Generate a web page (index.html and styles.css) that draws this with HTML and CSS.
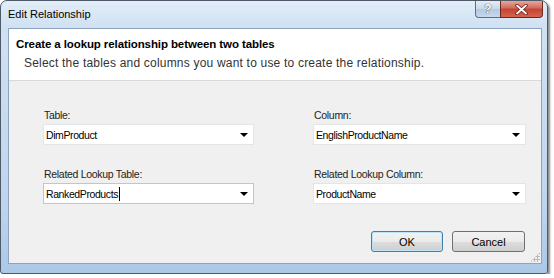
FILE: index.html
```html
<!DOCTYPE html>
<html lang="en">
<head>
  <meta charset="UTF-8" />
  <title>Edit Relationship</title>
  <link rel="stylesheet" href="styles.css">
</head>
<body>
  <div class="window">
    <div class="title-bar">
      <span class="title">Edit Relationship</span>
      <div class="caption-buttons">
        <div class="cap-btn help">?</div>
        <div class="cap-btn close">
          <svg width="13" height="11" viewBox="0 0 13 11">
            <path d="M2 1.5 L11 9.5 M11 1.5 L2 9.5" stroke="#6d1d14" stroke-width="3.4" stroke-linecap="round"/>
            <path d="M2 1.5 L11 9.5 M11 1.5 L2 9.5" stroke="#ffffff" stroke-width="1.8" stroke-linecap="round"/>
          </svg>
        </div>
      </div>
    </div>
    <div class="client">
      <div class="header">
        <div class="header-title">Create a lookup relationship between two tables</div>
        <div class="header-sub">Select the tables and columns you want to use to create the relationship.</div>
      </div>
      <div class="body">
        <div class="fields">
          <div class="field">
            <label>Table:</label>
            <div class="combo"><span>DimProduct</span><i class="arrow"></i></div>
          </div>
          <div class="field">
            <label>Column:</label>
            <div class="combo"><span>EnglishProductName</span><i class="arrow"></i></div>
          </div>
          <div class="field">
            <label>Related Lookup Table:</label>
            <div class="combo focused"><span>RankedProducts<b class="caret"></b></span><i class="arrow"></i></div>
          </div>
          <div class="field">
            <label>Related Lookup Column:</label>
            <div class="combo"><span>ProductName</span><i class="arrow"></i></div>
          </div>
        </div>
        <div class="buttons">
          <button class="btn default">OK</button>
          <button class="btn">Cancel</button>
        </div>
        <div class="grip"></div>
      </div>
    </div>
  </div>
</body>
</html>
```

FILE: styles.css
```css
body {
  margin: 0;
  background: #ffffff;
  font-family: "Liberation Sans", Arial, sans-serif;
  font-size: 12px;
  color: #000;
}

.window {
  width: 546px;
  height: 272px;
  border: 1px solid #4e5a68;
  border-radius: 7px 7px 3px 3px;
  background: linear-gradient(to bottom, #e2edf8 0px, #d0e1f2 26px, #bfd5ed 200px, #abc8e7 272px);
  box-shadow: 2px 2px 2px rgba(0, 0, 0, 0.45);
  display: flex;
  flex-direction: column;
  position: relative;
}

.title-bar {
  height: 27px;
  display: flex;
  align-items: flex-start;
  padding-left: 7px;
}

.title {
  font-size: 11px;
  margin-top: 7px;
  color: #000;
}

.caption-buttons {
  margin-left: auto;
  margin-right: 4px;
  display: flex;
}

.cap-btn {
  height: 17px;
  border: 1px solid #59708a;
  border-top: none;
  display: flex;
  align-items: center;
  justify-content: center;
  box-sizing: border-box;
}

.help {
  width: 25px;
  border-radius: 0 0 0 4px;
  border-right: none;
  background: linear-gradient(to bottom, #e4ecf5, #c9d8ea 50%, #b3c8e0 51%, #c6d8ee);
  font-weight: bold;
  font-size: 12px;
  color: #fff;
  text-shadow: 0 0 1px #38475c, 0 0 1px #38475c;
}

.close {
  width: 43px;
  border-radius: 0 0 4px 0;
  border-color: #6b2821;
  background: linear-gradient(to bottom, #e7a79a, #d1695b 45%, #c5432f 50%, #d5644f);
}

.client {
  flex: 1;
  margin: 0 5px 9px 7px;
  border: 1px solid #8ea3bd;
  background: #f0f0f0;
  display: flex;
  flex-direction: column;
}

.header {
  background: #ffffff;
  height: 52px;
  border-bottom: 1px solid #d9d9d9;
  padding: 7px 0 0 7px;
  box-sizing: border-box;
}

.header-title {
  font-weight: bold;
  font-size: 11.5px;
  letter-spacing: -0.1px;
  line-height: 16px;
}

.header-sub {
  margin-top: 4px;
  padding-left: 8px;
  color: #333;
  letter-spacing: 0.2px;
  line-height: 15px;
}

.body {
  flex: 1;
  position: relative;
  padding: 27px 16px 0 34px;
}

.fields {
  display: grid;
  grid-template-columns: 211px 213px;
  column-gap: 59px;
  row-gap: 22px;
}

.field label {
  display: block;
  padding-left: 1px;
  font-size: 10.5px;
  letter-spacing: -0.3px;
  line-height: 15px;
  margin-bottom: 1px;
  color: #222;
}

.combo {
  height: 21px;
  box-sizing: border-box;
  background: #fff;
  border: 1px solid #e2e5ea;
  display: flex;
  align-items: center;
  padding-left: 2px;
  font-size: 10.5px;
  letter-spacing: -0.4px;
  position: relative;
}

.combo.focused {
  border-color: #a8cbee;
}

.caret {
  display: inline-block;
  width: 1px;
  height: 14px;
  background: #000;
  vertical-align: -3px;
  margin-left: 1px;
}

.arrow {
  margin-left: auto;
  margin-right: 5px;
  width: 0;
  height: 0;
  border-left: 4px solid transparent;
  border-right: 4px solid transparent;
  border-top: 4px solid #000;
}

.buttons {
  display: flex;
  justify-content: flex-end;
  gap: 9px;
  margin-top: 27px;
}

.btn {
  font-family: "Liberation Sans", Arial, sans-serif;
  font-size: 11px;
  height: 21px;
  width: 73px;
  border: 1px solid #707070;
  border-radius: 3px;
  background: linear-gradient(to bottom, #f2f2f2, #ebebeb 50%, #dddddd 51%, #cfcfcf);
  color: #000;
  padding: 0;
}

.btn.default {
  width: 72px;
  border-color: #3c7fb1;
  box-shadow: inset 0 0 0 1px #bfe4f8;
}

.grip {
  position: absolute;
  right: 1px;
  bottom: 1px;
  width: 10px;
  height: 10px;
  background-image: radial-gradient(circle, #b8b8b8 1px, transparent 1.2px);
  background-size: 3px 3px;
  clip-path: polygon(100% 0, 100% 100%, 0 100%);
}
```
